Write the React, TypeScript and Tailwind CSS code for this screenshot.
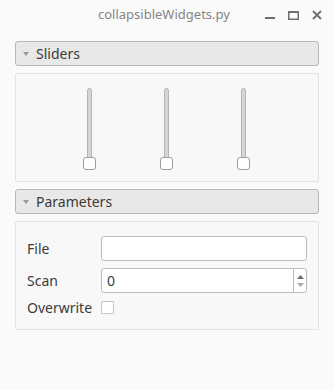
import React from "react";

const Header: React.FC<{ title: string }> = ({ title }) => (
  <div className="h-[25px] flex items-center border border-[#b8b8b8] rounded-[3px] bg-[#e8e8e8]">
    <svg width="6" height="4" viewBox="0 0 6 4" className="ml-[7px]">
      <polygon points="0,0 6,0 3,4" fill="#9a9a9a" />
    </svg>
    <span className="ml-[7px] text-[14px] text-[#3c3b37]">{title}</span>
  </div>
);

const Slider: React.FC = () => (
  <div className="w-[12px] h-[82px] flex flex-col items-center">
    <div className="w-[5px] flex-1 -mb-[4px] rounded-full border border-[#b4b4b4] bg-[#d6d6d6]" />
    <div className="w-[13px] h-[13px] rounded-[3px] border border-[#9e9e9e] bg-white" />
  </div>
);

export default function App() {
  return (
    <div
      className="w-[334px] h-[390px] bg-[#fafafa] text-[#3c3b37]"
      style={{ fontFamily: '"Noto Sans", "Open Sans", sans-serif' }}
    >
      <div className="h-[30px] flex items-center">
        <span className="ml-[98px] text-[13px] text-[#858585]">collapsibleWidgets.py</span>
        <div className="ml-auto mr-[12px] flex items-center gap-[13px]">
          <svg width="10" height="10" viewBox="0 0 10 10">
            <rect x="0" y="7" width="10" height="2" fill="#6e6e6e" />
          </svg>
          <svg width="11" height="9" viewBox="0 0 11 9">
            <rect x="0.75" y="0.75" width="9.5" height="7.5" fill="none" stroke="#6e6e6e" strokeWidth="1.5" />
            <rect x="0" y="0" width="11" height="2" fill="#6e6e6e" />
          </svg>
          <svg width="10" height="10" viewBox="0 0 10 10">
            <path d="M1 1 L9 9 M9 1 L1 9" stroke="#6e6e6e" strokeWidth="1.8" />
          </svg>
        </div>
      </div>

      <div className="px-[15px] pt-[11px]">
        <Header title="Sliders" />
        <div className="mt-[7px] h-[109px] border border-[#e2e2e2] rounded-[2px] bg-[#f8f8f8] flex pl-[67px] pt-[14px] gap-[65px]">
          <Slider />
          <Slider />
          <Slider />
        </div>

        <div className="mt-[7px]">
          <Header title="Parameters" />
        </div>
        <div className="mt-[7px] h-[109px] border border-[#e2e2e2] rounded-[2px] bg-[#f8f8f8] pt-[14px] pl-[11px] pr-[11px] text-[14px]">
          <div className="flex items-center h-[25px]">
            <span className="w-[74px]">File</span>
            <div className="flex-1 h-[25px] border border-[#bdbdbd] rounded-[3px] bg-white" />
          </div>
          <div className="flex items-center h-[25px] mt-[7px]">
            <span className="w-[74px]">Scan</span>
            <div className="flex-1 h-[25px] border border-[#bdbdbd] rounded-[3px] bg-white flex">
              <span className="flex-1 pl-[5px] leading-[23px]">0</span>
              <div className="w-[13px] border-l border-[#bdbdbd] flex flex-col items-center justify-center gap-[4px]">
                <svg width="7" height="4" viewBox="0 0 7 4">
                  <polygon points="0,4 7,4 3.5,0" fill="#6a6a6a" />
                </svg>
                <svg width="7" height="4" viewBox="0 0 7 4">
                  <polygon points="0,0 7,0 3.5,4" fill="#a8a8a8" />
                </svg>
              </div>
            </div>
          </div>
          <div className="flex items-center h-[17px] mt-[6px]">
            <span className="w-[74px]">Overwrite</span>
            <div className="w-[13px] h-[13px] border border-[#c4c4c4] rounded-[1px] bg-white" />
          </div>
        </div>
      </div>
    </div>
  );
}
